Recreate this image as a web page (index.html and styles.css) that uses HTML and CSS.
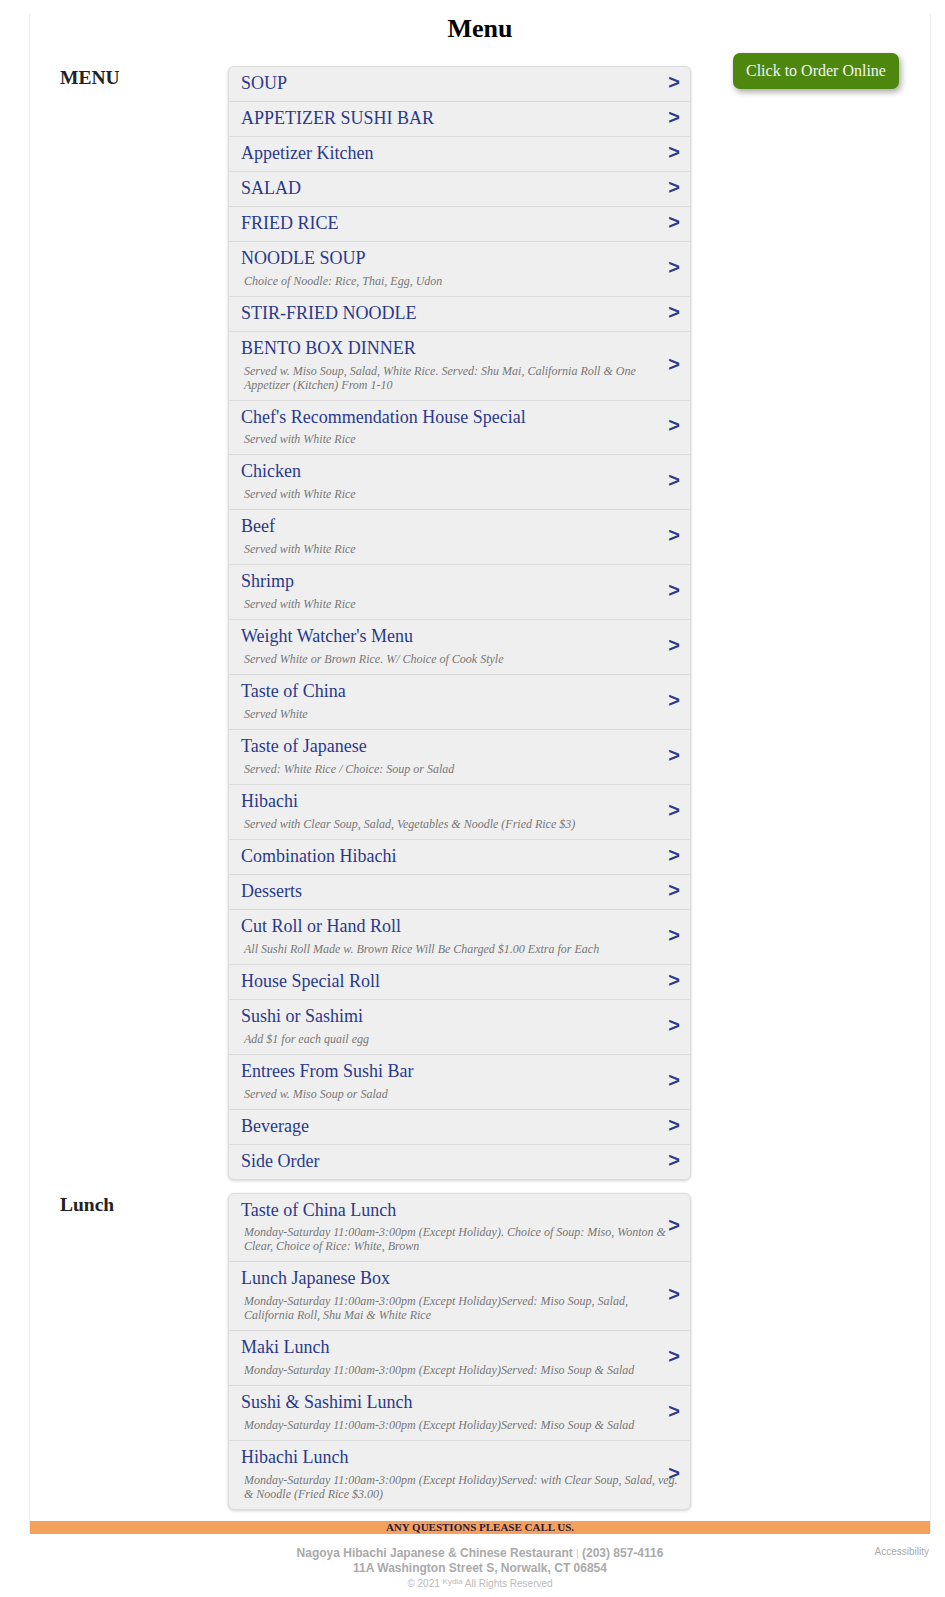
FILE: index.html
```html
<!DOCTYPE html>
<html lang="en">
<head>
<meta charset="utf-8">
<title>Menu</title>
<link rel="stylesheet" href="styles.css">
</head>
<body>
<div class="page">
  <h1 class="page-title">Menu</h1>

  <section class="menu-section">
    <h2 class="section-label">MENU</h2>
    <ul class="menu-box">
      <li class="item"><div class="item-title">SOUP</div><span class="arrow">&gt;</span></li>
      <li class="item"><div class="item-title">APPETIZER SUSHI BAR</div><span class="arrow">&gt;</span></li>
      <li class="item"><div class="item-title">Appetizer Kitchen</div><span class="arrow">&gt;</span></li>
      <li class="item"><div class="item-title">SALAD</div><span class="arrow">&gt;</span></li>
      <li class="item"><div class="item-title">FRIED RICE</div><span class="arrow">&gt;</span></li>
      <li class="item"><div class="item-title">NOODLE SOUP</div><div class="item-desc">Choice of Noodle: Rice, Thai, Egg, Udon</div><span class="arrow">&gt;</span></li>
      <li class="item"><div class="item-title">STIR-FRIED NOODLE</div><span class="arrow">&gt;</span></li>
      <li class="item"><div class="item-title">BENTO BOX DINNER</div><div class="item-desc">Served w. Miso Soup, Salad, White Rice. Served: Shu Mai, California Roll &amp; One Appetizer (Kitchen) From 1-10</div><span class="arrow">&gt;</span></li>
      <li class="item"><div class="item-title">Chef's Recommendation House Special</div><div class="item-desc">Served with White Rice</div><span class="arrow">&gt;</span></li>
      <li class="item"><div class="item-title">Chicken</div><div class="item-desc">Served with White Rice</div><span class="arrow">&gt;</span></li>
      <li class="item"><div class="item-title">Beef</div><div class="item-desc">Served with White Rice</div><span class="arrow">&gt;</span></li>
      <li class="item"><div class="item-title">Shrimp</div><div class="item-desc">Served with White Rice</div><span class="arrow">&gt;</span></li>
      <li class="item"><div class="item-title">Weight Watcher's Menu</div><div class="item-desc">Served White or Brown Rice. W/ Choice of Cook Style</div><span class="arrow">&gt;</span></li>
      <li class="item"><div class="item-title">Taste of China</div><div class="item-desc">Served White</div><span class="arrow">&gt;</span></li>
      <li class="item"><div class="item-title">Taste of Japanese</div><div class="item-desc">Served: White Rice / Choice: Soup or Salad</div><span class="arrow">&gt;</span></li>
      <li class="item"><div class="item-title">Hibachi</div><div class="item-desc">Served with Clear Soup, Salad, Vegetables &amp; Noodle (Fried Rice $3)</div><span class="arrow">&gt;</span></li>
      <li class="item"><div class="item-title">Combination Hibachi</div><span class="arrow">&gt;</span></li>
      <li class="item"><div class="item-title">Desserts</div><span class="arrow">&gt;</span></li>
      <li class="item"><div class="item-title">Cut Roll or Hand Roll</div><div class="item-desc">All Sushi Roll Made w. Brown Rice Will Be Charged $1.00 Extra for Each</div><span class="arrow">&gt;</span></li>
      <li class="item"><div class="item-title">House Special Roll</div><span class="arrow">&gt;</span></li>
      <li class="item"><div class="item-title">Sushi or Sashimi</div><div class="item-desc">Add $1 for each quail egg</div><span class="arrow">&gt;</span></li>
      <li class="item"><div class="item-title">Entrees From Sushi Bar</div><div class="item-desc">Served w. Miso Soup or Salad</div><span class="arrow">&gt;</span></li>
      <li class="item"><div class="item-title">Beverage</div><span class="arrow">&gt;</span></li>
      <li class="item"><div class="item-title">Side Order</div><span class="arrow">&gt;</span></li>
    </ul>
    <div class="aside">
      <a class="order-btn" href="#">Click to Order Online</a>
    </div>
  </section>

  <section class="menu-section">
    <h2 class="section-label">Lunch</h2>
    <ul class="menu-box">
      <li class="item"><div class="item-title">Taste of China Lunch</div><div class="item-desc">Monday-Saturday 11:00am-3:00pm (Except Holiday). Choice of Soup: Miso, Wonton &amp; Clear, Choice of Rice: White, Brown</div><span class="arrow">&gt;</span></li>
      <li class="item"><div class="item-title">Lunch Japanese Box</div><div class="item-desc">Monday-Saturday 11:00am-3:00pm (Except Holiday)Served: Miso Soup, Salad, California Roll, Shu Mai &amp; White Rice</div><span class="arrow">&gt;</span></li>
      <li class="item"><div class="item-title">Maki Lunch</div><div class="item-desc">Monday-Saturday 11:00am-3:00pm (Except Holiday)Served: Miso Soup &amp; Salad</div><span class="arrow">&gt;</span></li>
      <li class="item"><div class="item-title">Sushi &amp; Sashimi Lunch</div><div class="item-desc">Monday-Saturday 11:00am-3:00pm (Except Holiday)Served: Miso Soup &amp; Salad</div><span class="arrow">&gt;</span></li>
      <li class="item"><div class="item-title">Hibachi Lunch</div><div class="item-desc">Monday-Saturday 11:00am-3:00pm (Except Holiday)Served: with Clear Soup, Salad, veg. &amp; Noodle (Fried Rice $3.00)</div><span class="arrow">&gt;</span></li>
    </ul>
    <div class="aside"></div>
  </section>

  <div class="call-bar">ANY QUESTIONS PLEASE CALL US.</div>
</div>

<footer class="footer">
  <div class="footer-spacer"></div>
  <div class="footer-info">
    <div class="footer-line">Nagoya Hibachi Japanese &amp; Chinese Restaurant <span class="sep">|</span> (203) 857-4116</div>
    <div class="footer-line">11A Washington Street S, Norwalk, CT 06854</div>
    <div class="copyright">&copy; 2021 <sup class="brand">Kydia</sup> All Rights Reserved</div>
  </div>
  <div class="footer-access"><a href="#">Accessibility</a></div>
</footer>
</body>
</html>
```

FILE: styles.css
```css
* { box-sizing: border-box; }

body {
  margin: 0;
  background: #fff;
  font-family: "Liberation Serif", "Times New Roman", serif;
  color: #222;
}

.page {
  width: 902px;
  margin-left: 29px;
  border-left: 1px solid #ececec;
  border-right: 1px solid #ececec;
}

.page-title {
  margin: 14px 0 9px;
  font-size: 26px;
  font-weight: bold;
  line-height: normal;
  text-align: center;
  color: #000;
}

.menu-section {
  display: flex;
  align-items: flex-start;
}

.section-label {
  width: 168px;
  margin: 14px 0 0 30px;
  font-size: 19.5px;
  font-weight: bold;
  line-height: normal;
  color: #222;
}

.menu-box {
  list-style: none;
  margin: 13px 0 0;
  padding: 0;
  width: 463px;
  background: #efefef;
  border: 1px solid #dcdcdc;
  border-radius: 6px;
  box-shadow: 0 1px 3px rgba(0, 0, 0, 0.18);
}

.item {
  position: relative;
  padding: 6px 11px 7px 12px;
  border-top: 1px solid #dcdcdc;
}

.item:first-child { border-top: none; }

.item-title {
  font-size: 18px;
  line-height: 20.94px;
  color: #2a3a8c;
}

.item-desc {
  margin: 5px 0 1px;
  padding-left: 3px;
  font-size: 12px;
  font-style: italic;
  line-height: 14px;
  color: #777;
}

.arrow {
  position: absolute;
  right: 10px;
  top: 50%;
  transform: translateY(-62%);
  font-family: "Liberation Sans", Arial, sans-serif;
  font-weight: bold;
  font-size: 20px;
  line-height: 1;
  color: #2a3a8c;
}

.aside {
  margin-left: 42px;
}

.order-btn {
  display: inline-block;
  padding: 9px 13px;
  background: #4e870e;
  color: #f4f4f4;
  font-size: 16px;
  line-height: normal;
  text-decoration: none;
  border-radius: 7px;
  box-shadow: 2px 3px 6px rgba(0, 0, 0, 0.35);
}

.call-bar {
  margin-top: 11px;
  height: 13px;
  background: #f4a15d;
  font-size: 11px;
  font-weight: bold;
  line-height: 13px;
  text-align: center;
  color: #2a1a40;
}

.footer {
  width: 902px;
  margin-left: 29px;
  display: grid;
  grid-template-columns: 1fr auto 1fr;
  padding-top: 12px;
  font-family: "Liberation Sans", Arial, sans-serif;
  color: #aaa;
}

.footer-info {
  text-align: center;
}

.footer-line {
  font-size: 12px;
  font-weight: bold;
  line-height: 15px;
}

.sep {
  font-weight: normal;
  font-size: 10px;
  color: #ccc;
}

.copyright {
  margin-top: 2px;
  font-size: 10px;
  line-height: 12px;
  color: #bbb;
}

.brand {
  font-size: 8px;
  vertical-align: 3px;
  line-height: 0;
}

.footer-access {
  justify-self: end;
  padding-right: 2px;
  font-size: 10px;
  line-height: 12px;
}

.footer-access a {
  color: #aaa;
  text-decoration: none;
}
```
